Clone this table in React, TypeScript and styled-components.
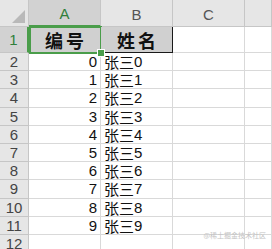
import React from "react";
import styled, { createGlobalStyle } from "styled-components";

const GlobalStyle = createGlobalStyle`
  html, body {
    margin: 0;
    padding: 0;
    background: #ffffff;
    overflow: hidden;
  }
  body {
    font-family: "Liberation Sans", "Noto Sans CJK SC", sans-serif;
  }
`;

const ROW_H = 18.2;

const Sheet = styled.div`
  position: relative;
  width: 272px;
  height: 249px;
  display: grid;
  grid-template-columns: 29px 72px 72px 72px 1fr;
  grid-template-rows: 27px 26px repeat(11, ${ROW_H}px);
  overflow: hidden;
  background: #fff;
`;

const Corner = styled.div`
  position: relative;
  background: #e6e6e6;
  border-right: 1px solid #c6c6c6;
  border-bottom: 1px solid #c6c6c6;
  box-sizing: border-box;
  &::after {
    content: "";
    position: absolute;
    right: 3px;
    bottom: 3px;
    width: 0;
    height: 0;
    border-left: 13px solid transparent;
    border-bottom: 13px solid #b9b9b9;
  }
`;

const ColHead = styled.div<{ $active?: boolean }>`
  box-sizing: border-box;
  display: flex;
  align-items: flex-end;
  justify-content: center;
  padding-bottom: 4px;
  line-height: 1;
  background: ${(p) => (p.$active ? "#d2d2d2" : "#e6e6e6")};
  border-right: 1px solid #c6c6c6;
  border-bottom: ${(p) => (p.$active ? "2px solid #4a9d4a" : "1px solid #c6c6c6")};
  color: ${(p) => (p.$active ? "#2f7f3a" : "#555")};
  font-size: 15px;
`;

const RowHead = styled.div<{ $active?: boolean }>`
  box-sizing: border-box;
  display: flex;
  align-items: center;
  justify-content: center;
  line-height: 1;
  background: ${(p) => (p.$active ? "#d2d2d2" : "#e6e6e6")};
  border-right: ${(p) => (p.$active ? "2px solid #4a9d4a" : "1px solid #c6c6c6")};
  border-bottom: 1px solid #c6c6c6;
  color: ${(p) => (p.$active ? "#2f7f3a" : "#444")};
  font-size: 15px;
`;

const TitleCell = styled.div<{ $selected?: boolean }>`
  position: relative;
  box-sizing: border-box;
  display: flex;
  align-items: center;
  justify-content: center;
  line-height: 1;
  background: #d0d0d0;
  border-right: 1px solid #1a1a1a;
  border-bottom: 1px solid #1a1a1a;
  color: #111;
  font-family: "Noto Sans CJK SC", sans-serif;
  font-weight: 700;
  font-size: 18px;
  letter-spacing: 3px;
  padding-left: 3px;
  ${(p) =>
    p.$selected &&
    `
    &::before {
      content: "";
      position: absolute;
      left: 0;
      top: -1px;
      right: -2px;
      bottom: -2px;
      border: 2px solid #4a9d4a;
      pointer-events: none;
    }
    &::after {
      content: "";
      position: absolute;
      right: -5px;
      bottom: -5px;
      width: 6px;
      height: 6px;
      background: #4a9d4a;
      border: 1px solid #fff;
      z-index: 2;
    }
  `}
`;

const Cell = styled.div<{ $align?: "left" | "right" }>`
  box-sizing: border-box;
  display: flex;
  align-items: center;
  justify-content: ${(p) => (p.$align === "right" ? "flex-end" : "flex-start")};
  padding: 0 3px;
  line-height: 1;
  border-right: 1px solid #d9d9d9;
  border-bottom: 1px solid #d9d9d9;
  color: #111;
  font-size: 15px;
  white-space: nowrap;
`;

const Name = styled.span`
  font-family: "Noto Sans CJK SC", sans-serif;
  font-size: 15px;
  line-height: 1;
`;

const Digit = styled.span`
  font-family: "Liberation Sans", sans-serif;
  font-size: 15px;
  line-height: 1;
`;

const Watermark = styled.div`
  position: absolute;
  right: 6px;
  bottom: 10px;
  line-height: 1;
  font-family: "Noto Sans CJK SC", sans-serif;
  font-size: 7px;
  color: #c4c4c4;
`;

const cols = ["A", "B", "C", ""];
const ids = [0, 1, 2, 3, 4, 5, 6, 7, 8, 9];

export default function App() {
  return (
    <>
      <GlobalStyle />
      <Sheet>
        <Corner />
        {cols.map((c, i) => (
          <ColHead key={"h" + i} $active={c === "A"}>
            {c}
          </ColHead>
        ))}

        <RowHead $active>1</RowHead>
        <TitleCell $selected>编号</TitleCell>
        <TitleCell>姓名</TitleCell>
        <Cell />
        <Cell />

        {ids.map((n) => (
          <React.Fragment key={n}>
            <RowHead>{n + 2}</RowHead>
            <Cell $align="right">{n}</Cell>
            <Cell>
              <Name>张三</Name>
              <Digit>{n}</Digit>
            </Cell>
            <Cell />
            <Cell />
          </React.Fragment>
        ))}

        <RowHead>12</RowHead>
        <Cell />
        <Cell />
        <Cell />
        <Cell />
        <Watermark>@稀土掘金技术社区</Watermark>
      </Sheet>
    </>
  );
}
